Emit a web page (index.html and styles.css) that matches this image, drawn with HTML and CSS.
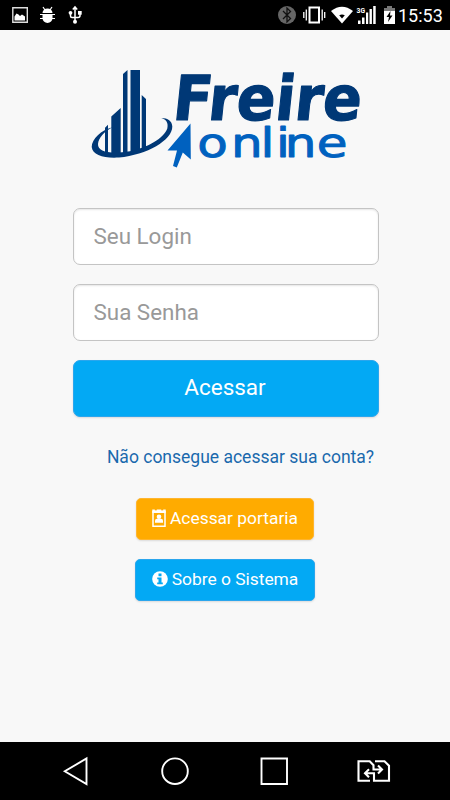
FILE: index.html
```html
<!DOCTYPE html>
<html lang="pt-BR">
<head>
<meta charset="utf-8">
<title>Freire Online</title>
<link rel="stylesheet" href="styles.css">
</head>
<body>
<header class="status">
  <svg class="status-left" width="100" height="30" viewBox="0 0 100 30" fill="#fff">
    <path d="M12.800 7.800h14.500v14.500H12.800z" fill="none" stroke="#ddd" stroke-width="1.400"/>
    <path d="M14.500 20.500v-4l2-3 2 1 1.500 1.500 2-1.500 3 2v4z"/>
    <path d="M42.500 13a5 4.500 0 0 1 10 0zM42.500 14.800h10V18a5 5 0 0 1-10 0z"/>
    <path d="M43 7l2 3M52 7l-2 3M40 14.500h15M40 18.500h15" stroke="#fff" stroke-width="1.200"/>
    <g fill="none" stroke="#fff" stroke-width="1.500"><path d="M75 8v13M70.500 13.500v2.500q0 1.500 1.500 1.500h6q2 0 2-2v-2M72.800 9.500L75 7l2.200 2.500"/></g>
    <circle cx="70.500" cy="12.800" r="1.900"/><path d="M78 11h3.700v3.700H78z"/><circle cx="75" cy="21.700" r="2"/>
  </svg>
  <div class="status-right">
    <svg width="132" height="30" viewBox="265 0 132 30" fill="#fff">
      <circle cx="287" cy="15" r="9" fill="#666"/>
      <path d="M283 11l7.500 7.500-3.500 3.500V8l3.500 3.500L283 19" fill="none" stroke="#111" stroke-width="1.300"/>
      <path d="M309.500 7.500h9.500v15h-9.500z" fill="none" stroke="#fff" stroke-width="2"/>
      <path d="M306.300 9.500v11M322.200 9.500v11M303.800 12v6M324.700 12v6" stroke="#fff" stroke-width="1.300"/>
      <path d="M331 11q11-8.500 22 0l-11 12.500z"/><path d="M339.200 15.200q2.800-1.600 5.600 0L342 18.500z" fill="#000"/>
      <text class="net" x="356.500" y="12.500" textLength="8.500" lengthAdjust="spacingAndGlyphs">3G</text>
      <path d="M358 20.500h2.500V24H358zM362 17.500h2.500V24H362zM366 12.500h2.200V24H366zM369.500 9h2.400v15h-2.400zM373.200 6h2.500v18h-2.500z"/>
      <path d="M384 10.500h11V24h-11z"/><path d="M384 10.500V8h3V6h5v2h3v2.500z" fill="#777"/>
      <path d="M390.500 11l-4 6h2.500l-1 5 4.500-6.500H390z" fill="#000"/>
    </svg>
    <span class="clock">15:53</span>
  </div>
</header>
<main class="page">
  <svg class="logo" width="280" height="108" viewBox="85 65 280 108">
    <g fill="#003876">
      <path d="M105 127.700l3-3V153.500h-3zM111.300 116.500l9.400-8.500v46h-9.400zM123 74l4.500-4v83H123zM130.500 70h9.500v81l-9.500 2zM141.700 95l4.300 4v50l-4.300 2z"/>
      <path d="M113 127C101 130 91.700 139 91.700 147C92.500 155 104 158.500 119 157.500C147 155 172.500 140 172.300 126.500C172 121 168 118 161.300 118C166.500 119.500 168.500 123 167.300 128.500C164 138 148 147.500 130 151.200C111 154.500 97.500 152 98 144C98.500 138 104 131.500 113 127z"/>
      <text class="brand" transform="translate(171.500 119.500) skewX(-6)" textLength="188.500" lengthAdjust="spacingAndGlyphs">Freire</text>
    </g>
    <path d="M190.500 123.500l-23 27h9.500L173 166l3.800 1.500 6-15 8 7z" fill="#0061bf"/>
    <text class="sub" transform="scale(1.25 1)" x="157.800 184.900 208.400 220.800 227.800 253.400" y="157">online</text>
  </svg>
  <form class="form">
    <input class="field" type="text" placeholder="Seu Login">
    <input class="field" type="password" placeholder="Sua Senha">
    <button class="btn btn-main" type="button">Acessar</button>
  </form>
  <a class="help">Não consegue acessar sua conta?</a>
  <button class="btn btn-small orange" type="button">
    <svg width="14" height="18" viewBox="0 0 14 18"><path d="M1 2.500h12v14.700H1z" fill="none" stroke="#fff" stroke-width="1.500"/><path d="M.3.500h2.500v1h2v-1h4.400v1h2v-1h2.500V4H.3z" fill="#fff"/><circle cx="7" cy="7.800" r="2.300" fill="#fff"/><path d="M3 13.800v-2q0-2 2-2h4q2 0 2 2v2z" fill="#fff"/></svg><span>Acessar portaria</span>
  </button>
  <button class="btn btn-small blue" type="button">
    <svg width="16" height="16" viewBox="0 0 16 16"><circle cx="8" cy="8" r="7.800" fill="#fff"/><path d="M6.500 2.500h3v2.700h-3zM5.200 6.500h4.300v5h1.300v1.800H5.200v-1.800h1.300V8.300H5.200z" fill="#03a9f4"/></svg><span>Sobre o Sistema</span>
  </button>
</main>
<nav class="nav">
  <svg width="450" height="58" viewBox="0 742 450 58" fill="none" stroke="#fff" stroke-width="1.900">
    <path d="M86.500 758.500v25.500L64.800 771.200z"/>
    <circle cx="175" cy="771.200" r="12.800"/>
    <path d="M261.500 758.500h25.500v25.500h-25.500z"/>
    <path d="M370 780.700h-11.500V761.200h11.200l3.800 4v4.300h8M378 765.500l4 4-4 4M375 761.200h9.500l4.500 4.500v15h-15v-7.500h-8M369 769.200l-4 4 4 4" stroke-width="2.100"/>
  </svg>
</nav>
</body>
</html>
```

FILE: styles.css
```css
* { box-sizing: border-box; }

body {
  margin: 0;
  height: 800px;
  display: flex;
  flex-direction: column;
  overflow: hidden;
  background: #f8f8f8;
  font-family: Roboto, "Liberation Sans", sans-serif;
}

svg { display: block; flex: none; }

.status {
  height: 30px;
  display: flex;
  justify-content: space-between;
  background: #000;
  color: #fff;
}

.status-right {
  display: flex;
  width: 185px;
}

.clock {
  font-size: 18px;
  line-height: 31px;
  margin-left: 1px;
  white-space: nowrap;
}

.net {
  font: bold 7.5px Roboto, sans-serif;
}

.page {
  flex: 1;
  display: flex;
  flex-direction: column;
  align-items: center;
  padding-top: 35px;
}

.logo { overflow: visible; }

.brand {
  font: bold 62px "DejaVu Sans", sans-serif;
  stroke: #003876;
  stroke-width: 1.2;
  stroke-linejoin: round;
}

.sub {
  font: 40px "DejaVu Sans", sans-serif;
  fill: #0061bf;
  stroke: #0061bf;
  stroke-width: .9;
  stroke-linejoin: round;
}

.form {
  width: 306px;
  margin: 35px 0 0 1px;
  display: flex;
  flex-direction: column;
  gap: 19px;
}

.field {
  height: 57px;
  width: 100%;
  padding: 0 20px 2px;
  border: 1px solid #c4c4c4;
  border-radius: 7px;
  background: #fff;
  box-shadow: inset 0 1px 2px rgba(0, 0, 0, .1);
  font: 22.4px Roboto, sans-serif;
  outline: 0;
}

.field::placeholder { color: #999; opacity: 1; }

.btn {
  border: 1px solid #2ba6ed;
  background: #03a9f4;
  color: #fff;
  font-family: Roboto, sans-serif;
  box-shadow: 0 1px 2px rgba(0, 0, 0, .12);
}

.btn-main {
  height: 57px;
  padding: 0 1px 3px 0;
  border-radius: 7px;
  font-size: 22.5px;
}

.help {
  margin: 30px 0 0 31px;
  height: 21px;
  line-height: 21px;
  font-size: 17.5px;
  color: #1a69ad;
  white-space: nowrap;
}

.btn-small {
  height: 42px;
  display: flex;
  align-items: center;
  justify-content: center;
  gap: 4px;
  padding: 0 0 3px;
  border-radius: 5px;
  font-size: 17.4px;
  white-space: nowrap;
}

.orange {
  width: 178px;
  margin-top: 30px;
  background: #ffab00;
  border-color: #ffb52e;
}

.blue {
  width: 180px;
  margin-top: 19px;
}

.nav {
  height: 58px;
  background: #000;
}
```
